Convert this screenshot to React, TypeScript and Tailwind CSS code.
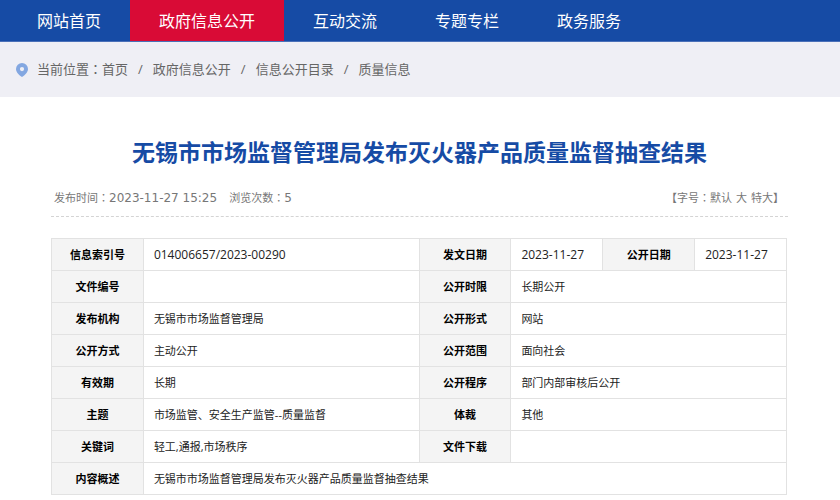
import React from 'react';

const navItems = [
  { label: '网站首页', active: false },
  { label: '政府信息公开', active: true },
  { label: '互动交流', active: false },
  { label: '专题专栏', active: false },
  { label: '政务服务', active: false },
];

const crumbs = ['首页', '政府信息公开', '信息公开目录', '质量信息'];

const rows = [
  ['文件编号', '', '公开时限', '长期公开'],
  ['发布机构', '无锡市市场监督管理局', '公开形式', '网站'],
  ['公开方式', '主动公开', '公开范围', '面向社会'],
  ['有效期', '长期', '公开程序', '部门内部审核后公开'],
  ['主题', '市场监管、安全生产监管--质量监督', '体裁', '其他'],
  ['关键词', '轻工,通报,市场秩序', '文件下载', ''],
];

// full-width colon, centred in its box
const Colon = () => <span className="font-['Noto_Sans_CJK_TC',sans-serif]">：</span>;

const Th = ({ children }: { children: React.ReactNode }) => (
  <th scope="row" className="h-8 border border-[#e2e2e2] bg-[#f4f4f4] p-0 text-center font-bold text-black">
    {children}
  </th>
);

const Td = ({ children, span = 1, numeric = false }: { children?: React.ReactNode; span?: number; numeric?: boolean }) => (
  <td colSpan={span} className={`h-8 border border-[#e2e2e2] py-0 pr-0 pl-[10px] text-[#222] ${numeric ? 'text-[12px]' : ''}`}>
    {children}
  </td>
);

const Navbar = () => (
  <nav className="flex h-[42px] border-b border-[#4a70b8] bg-[#164ba5] pl-2 text-[16px] text-white">
    {navItems.map((item) => (
      <a
        key={item.label}
        href="#"
        className={`flex items-center px-[29px] whitespace-nowrap ${item.active ? 'bg-[#d90b36]' : 'hover:bg-[#d90b36]'}`}
      >
        {item.label}
      </a>
    ))}
  </nav>
);

const Breadcrumb = () => (
  <div className="flex h-[55px] items-center bg-[#efeff5] pl-4 text-[13px] text-[#666]">
    <svg className="mr-[9px] h-[14px] w-3" viewBox="0 0 12 14" aria-hidden="true">
      <path
        fill="#83a7e1"
        fillRule="evenodd"
        d="M6 0a6 6 0 0 1 6 6c0 3.100-3.100 6.100-6 8C3.100 12.100 0 9.100 0 6a6 6 0 0 1 6-6Zm0 4a2.100 2.100 0 1 0 0 4.200A2.100 2.100 0 0 0 6 4Z"
      />
    </svg>
    <div className="flex items-baseline">
      <span>
        当前位置
        <Colon />
      </span>
      {crumbs.map((crumb, i) => (
        <React.Fragment key={crumb}>
          {i > 0 && <span className="mx-[10px]">/</span>}
          <a href="#">{crumb}</a>
        </React.Fragment>
      ))}
    </div>
  </div>
);

const App = () => {
  return (
    <div className="min-h-screen bg-white font-['Open_Sans','Noto_Sans_CJK_SC',sans-serif]">
      <Navbar />
      <Breadcrumb />
      <main className="pr-[52px] pl-[51px] pt-10">
        <h1 className="text-center text-[23px] leading-[30px] font-bold text-[#164ba5]">
          无锡市市场监督管理局发布灭火器产品质量监督抽查结果
        </h1>
        <div className="mt-[14px] flex h-9 items-center justify-between border-b border-dashed border-[#d4d4d4] pr-1 pl-[3px] font-['DejaVu_Sans','Noto_Sans_CJK_SC',sans-serif] text-[11px] text-[#777]">
          <div className="flex items-baseline gap-3">
            <span>
              发布时间
              <Colon />
              <time className="text-[12px]">2023-11-27 15:25</time>
            </span>
            <span>
              浏览次数
              <Colon />
              <span className="text-[12px]">5</span>
            </span>
          </div>
          <div className="flex items-baseline">
            <span>
              【字号
              <Colon />
            </span>
            <button type="button" className="mr-1">默认</button>
            <button type="button" className="mr-1">大</button>
            <button type="button">特大</button>
            <span>】</span>
          </div>
        </div>
        <div className="mt-[21px] pr-px">
          <table className="w-full table-fixed border-collapse text-[11px] leading-4">
            <colgroup>
              <col className="w-1/8" />
              <col className="w-3/8" />
              <col className="w-1/8" />
              <col className="w-1/8" />
              <col className="w-1/8" />
              <col className="w-1/8" />
            </colgroup>
            <tbody>
              <tr>
                <Th>信息索引号</Th>
                <Td numeric>014006657/2023-00290</Td>
                <Th>发文日期</Th>
                <Td numeric>2023-11-27</Td>
                <Th>公开日期</Th>
                <Td numeric>2023-11-27</Td>
              </tr>
              {rows.map(([name, value, otherName, otherValue]) => (
                <tr key={name}>
                  <Th>{name}</Th>
                  <Td>{value}</Td>
                  <Th>{otherName}</Th>
                  <Td span={3}>{otherValue}</Td>
                </tr>
              ))}
              <tr>
                <Th>内容概述</Th>
                <Td span={5}>无锡市市场监督管理局发布灭火器产品质量监督抽查结果</Td>
              </tr>
            </tbody>
          </table>
        </div>
      </main>
    </div>
  );
};

export default App;
